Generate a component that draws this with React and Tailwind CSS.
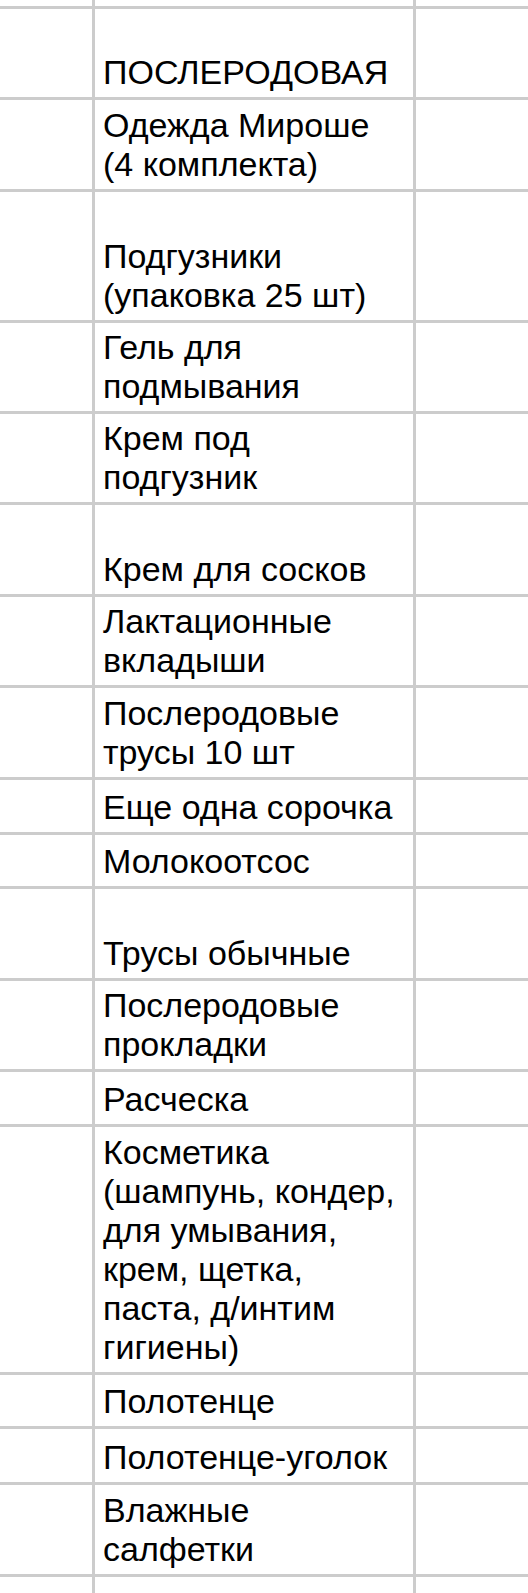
import React from "react";

const rows = [
  { h: "h-[6px]", lines: [] },
  { h: "h-[88px]", lines: ["ПОСЛЕРОДОВАЯ"] },
  { h: "h-[89px]", lines: ["Одежда Мироше", "(4 комплекта)"] },
  { h: "h-[128px]", lines: ["Подгузники", "(упаковка 25 шт)"] },
  { h: "h-[88px]", lines: ["Гель для", "подмывания"] },
  { h: "h-[88px]", lines: ["Крем под", "подгузник"] },
  { h: "h-[89px]", lines: ["Крем для сосков"] },
  { h: "h-[88px]", lines: ["Лактационные", "вкладыши"] },
  { h: "h-[89px]", lines: ["Послеродовые", "трусы 10 шт"] },
  { h: "h-[52px]", lines: ["Еще одна сорочка"] },
  { h: "h-[51px]", lines: ["Молокоотсос"] },
  { h: "h-[89px]", lines: ["Трусы обычные"] },
  { h: "h-[88px]", lines: ["Послеродовые", "прокладки"] },
  { h: "h-[52px]", lines: ["Расческа"] },
  {
    h: "h-[245px]",
    lines: [
      "Косметика",
      "(шампунь, кондер,",
      "для умывания,",
      "крем, щетка,",
      "паста, д/интим",
      "гигиены)",
    ],
  },
  { h: "h-[51px]", lines: ["Полотенце"] },
  { h: "h-[53px]", lines: ["Полотенце-уголок"] },
  { h: "h-[89px]", lines: ["Влажные", "салфетки"] },
  { h: "h-[40px]", lines: [] },
];

function cx(...c) {
  return c.filter(Boolean).join(" ");
}

export default function App() {
  return (
    <div className="w-[528px] h-[1593px] overflow-hidden bg-white font-['Liberation_Sans',Arial,sans-serif]">
      <div className="grid grid-cols-[92px_318px_1fr] gap-[3px] bg-[#cccccc]">
        {rows.map((r, i) => (
          <React.Fragment key={i}>
            <div className={cx("bg-white", r.h)} />
            <div
              className={cx(
                "bg-white flex flex-col justify-end pl-2 pb-[5px] overflow-hidden text-[34px] leading-[39px] text-black",
                r.h
              )}
            >
              {r.lines.map((l, j) => (
                <span key={j} className="block whitespace-nowrap">
                  {l}
                </span>
              ))}
            </div>
            <div className={cx("bg-white", r.h)} />
          </React.Fragment>
        ))}
      </div>
    </div>
  );
}
